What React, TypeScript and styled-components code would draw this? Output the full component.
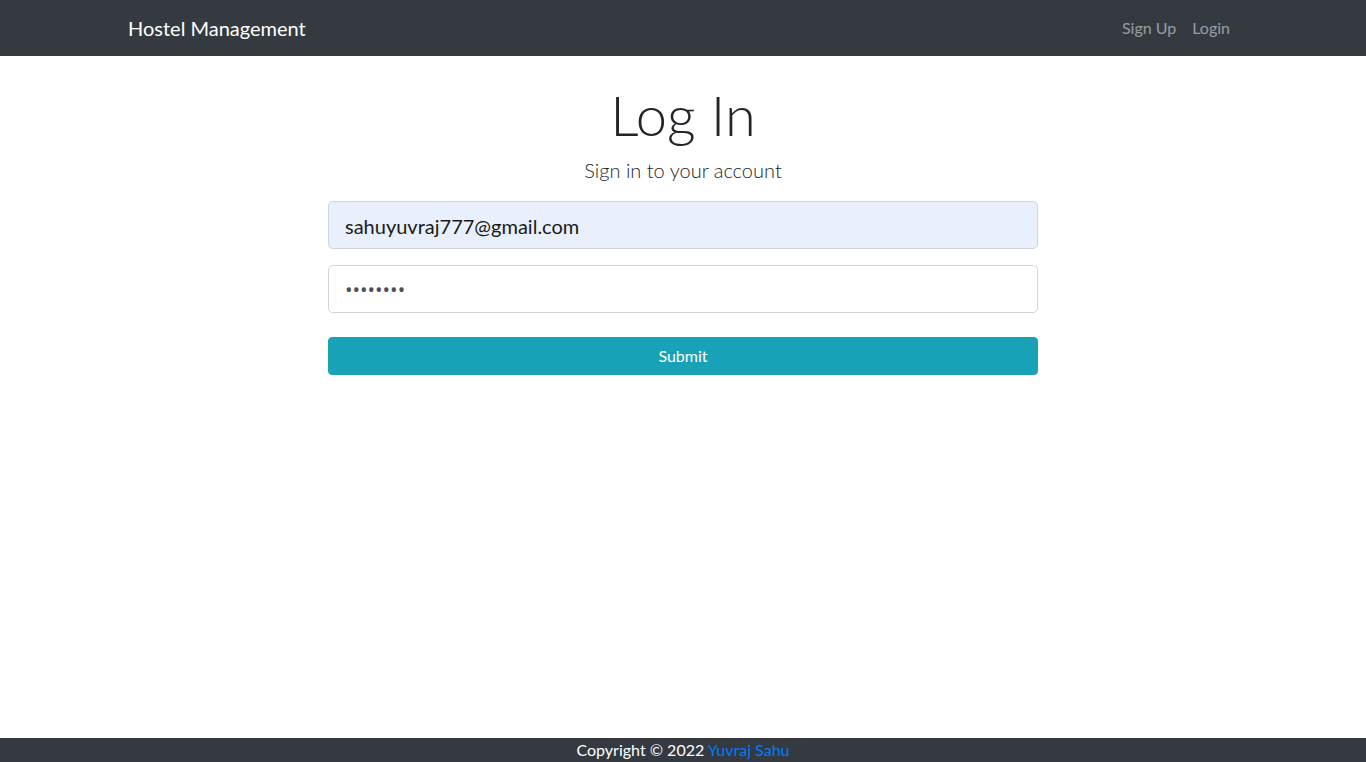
import React from "react";
import styled, { createGlobalStyle } from "styled-components";

const Global = createGlobalStyle`
  html, body { margin: 0; padding: 0; }
  body {
    font-family: Lato, "Open Sans", sans-serif;
    font-size: 16px;
    line-height: 1.5;
    color: #212529;
    background: #fff;
  }
  * { box-sizing: border-box; }
`;

const Page = styled.div`
  min-height: 100vh;
  display: flex;
  flex-direction: column;
`;

const Navbar = styled.nav`
  background: #343a40;
  padding: 8px 0;
`;

const NavContainer = styled.div`
  width: 1140px;
  margin: 0 auto;
  padding: 0 15px;
  display: flex;
  align-items: center;
  justify-content: space-between;
`;

const Brand = styled.a`
  color: #fff;
  font-size: 20px;
  line-height: 30px;
  padding: 5px 0;
  text-decoration: none;
`;

const NavLinks = styled.div`
  display: flex;
`;

const NavLink = styled.a`
  color: rgba(255, 255, 255, 0.5);
  padding: 8px;
  text-decoration: none;
  font-size: 16px;
  line-height: 24px;
`;

const Main = styled.main`
  flex: 1;
  display: flex;
  flex-direction: column;
  align-items: center;
  padding-top: 25px;
`;

const Title = styled.h1`
  font-size: 56px;
  font-weight: 300;
  line-height: 1.2;
  margin: 0 0 7px;
`;

const Lead = styled.p`
  font-size: 20px;
  font-weight: 300;
  line-height: 1.5;
  margin: 0 0 16px;
`;

const Form = styled.form`
  width: 710px;
  display: flex;
  flex-direction: column;
`;

const Input = styled.input<{ $autofill?: boolean }>`
  height: 48px;
  padding: 9px 16px 7px;
  font-family: inherit;
  font-size: 20px;
  line-height: 1.5;
  color: ${(p) => (p.$autofill ? "#1a1a1a" : "#495057")};
  background: ${(p) => (p.$autofill ? "#e8f0fe" : "#fff")};
  border: 1px solid #ced4da;
  border-radius: 4.8px;
  margin-bottom: 16px;
  outline: none;
  &[type="password"] {
    font-family: "Open Sans", sans-serif;
    padding: 8px 16px;
  }
`;

const Button = styled.button`
  margin-top: 8px;
  height: 38px;
  background: #17a2b8;
  border: 1px solid #17a2b8;
  color: #fff;
  border-radius: 4px;
  font-family: inherit;
  font-size: 16px;
  line-height: 1.5;
  cursor: pointer;
`;

const Footer = styled.footer`
  background: #343a40;
  color: #fff;
  text-align: center;
  font-size: 16px;
  line-height: 24px;
`;

const FooterLink = styled.a`
  color: #007bff;
  text-decoration: none;
`;

export default function App() {
  return (
    <Page>
      <Global />
      <Navbar>
        <NavContainer>
          <Brand href="#">Hostel Management</Brand>
          <NavLinks>
            <NavLink href="#">Sign Up</NavLink>
            <NavLink href="#">Login</NavLink>
          </NavLinks>
        </NavContainer>
      </Navbar>
      <Main>
        <Title>Log In</Title>
        <Lead>Sign in to your account</Lead>
        <Form onSubmit={(e) => e.preventDefault()}>
          <Input $autofill type="email" defaultValue="sahuyuvraj777@gmail.com" />
          <Input type="password" defaultValue="password" />
          <Button type="submit">Submit</Button>
        </Form>
      </Main>
      <Footer>
        Copyright © 2022 <FooterLink href="#">Yuvraj Sahu</FooterLink>
      </Footer>
    </Page>
  );
}
